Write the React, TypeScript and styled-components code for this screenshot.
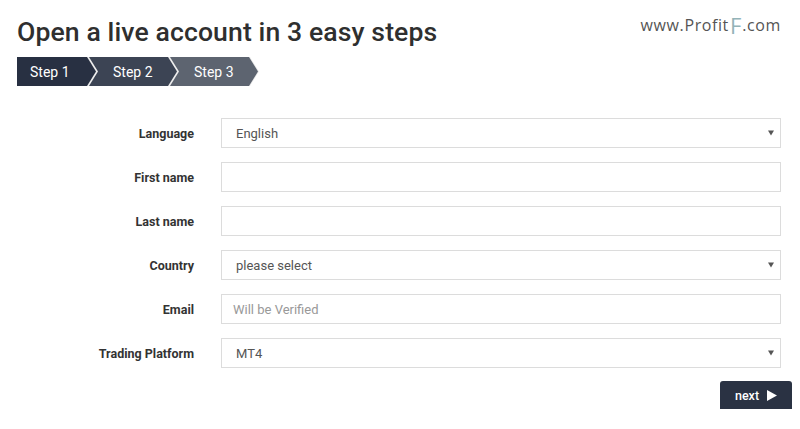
import React from "react";
import styled, { createGlobalStyle } from "styled-components";

const Global = createGlobalStyle`
  html, body { margin: 0; padding: 0; background: #fff; }
  body { font-family: Roboto, "Liberation Sans", Arial, sans-serif; color: #333; }
  * { box-sizing: border-box; }
`;

const Page = styled.div`
  width: 800px;
  height: 429px;
  padding: 15px 8px 0 17px;
  position: relative;
`;

const Header = styled.div`
  display: flex;
  justify-content: space-between;
  align-items: flex-start;
`;

const Title = styled.h1`
  margin: 0;
  font-size: 26.6px;
  font-weight: 500;
  line-height: 34px;
  color: #2f2f2f;
  letter-spacing: 0.1px;
`;

const Logo = styled.div`
  font-family: "Open Sans", "DejaVu Sans", sans-serif;
  font-size: 16px;
  color: #555;
  margin-top: -8px;
  margin-right: 11px;
  letter-spacing: 0.6px;
  display: flex;
  align-items: baseline;
  span {
    color: #93b3b8;
    font-size: 22px;
    font-weight: 400;
    margin: 0 1px;
    letter-spacing: 0;
    position: relative;
    top: 3px;
  }
`;

const Steps = styled.div`
  display: flex;
  margin-top: 8px;
  height: 29px;
`;

const Step = styled.div<{ $bg: string; $first?: boolean }>`
  position: relative;
  width: ${(p) => (p.$first ? 80 : 90)}px;
  height: 29px;
  margin-left: ${(p) => (p.$first ? 0 : -9)}px;
  background: #e8e8e8;
  clip-path: ${(p) =>
    p.$first
      ? "polygon(0 0, 71px 0, 80px 50%, 71px 100%, 0 100%)"
      : "polygon(0 0, 81px 0, 90px 50%, 81px 100%, 0 100%, 9px 50%)"};
  &::after {
    content: "";
    position: absolute;
    inset: 0;
    background: ${(p) => p.$bg};
    clip-path: ${(p) =>
      p.$first
        ? "polygon(0 0, 70px 0, 79px 50%, 70px 100%, 0 100%)"
        : "polygon(1px 0, 80px 0, 89px 50%, 80px 100%, 1px 100%, 10px 50%)"};
  }
`;

const StepLabel = styled.span<{ $first?: boolean }>`
  position: relative;
  z-index: 1;
  display: flex;
  height: 100%;
  align-items: center;
  padding-left: ${(p) => (p.$first ? 13 : 25)}px;
  color: #fff;
  font-size: 14px;
  font-weight: 400;
`;

const Form = styled.form`
  display: flex;
  flex-direction: column;
  gap: 14px;
  margin-top: 32px;
`;

const Row = styled.div`
  display: grid;
  grid-template-columns: 177px 560px;
  column-gap: 27px;
  align-items: center;
`;

const Label = styled.label`
  text-align: right;
  font-size: 12.5px;
  font-weight: 700;
  color: #333;
`;

const Field = styled.div`
  position: relative;
  height: 30px;
  border: 1px solid #dcdcdc;
  background: #fff;
  display: flex;
  align-items: center;
`;

const Value = styled.span<{ $placeholder?: boolean }>`
  font-size: 13px;
  padding-left: ${(p) => (p.$placeholder ? 11 : 14)}px;
  color: ${(p) => (p.$placeholder ? "#999" : "#555")};
`;

const Caret = styled.span`
  position: absolute;
  right: 6px;
  top: 50%;
  transform: translateY(-50%);
  width: 0;
  height: 0;
  border-left: 3px solid transparent;
  border-right: 3px solid transparent;
  border-top: 5px solid #555;
`;

const Actions = styled.div`
  display: flex;
  justify-content: flex-end;
  margin-top: 13px;
`;

const Next = styled.button`
  width: 72px;
  height: 28px;
  border: none;
  border-radius: 3px 3px 0 0;
  background: #2a3243;
  color: #fff;
  font-family: Roboto, sans-serif;
  font-size: 12.5px;
  font-weight: 500;
  display: flex;
  align-items: center;
  justify-content: center;
  gap: 8px;
  padding: 0;
  svg { display: block; }
`;

const rows: { label: string; value?: string; placeholder?: string; select?: boolean }[] = [
  { label: "Language", value: "English", select: true },
  { label: "First name" },
  { label: "Last name" },
  { label: "Country", value: "please select", select: true },
  { label: "Email", placeholder: "Will be Verified" },
  { label: "Trading Platform", value: "MT4", select: true },
];

export default function App() {
  return (
    <Page>
      <Global />
      <Header>
        <Title>Open a live account in 3 easy steps</Title>
        <Logo>
          www.Profit<span>F</span>.com
        </Logo>
      </Header>
      <Steps>
        <Step $bg="#283042" $first>
          <StepLabel $first>Step 1</StepLabel>
        </Step>
        <Step $bg="#3c4454">
          <StepLabel>Step 2</StepLabel>
        </Step>
        <Step $bg="#5d6470">
          <StepLabel>Step 3</StepLabel>
        </Step>
      </Steps>
      <Form>
        {rows.map((r) => (
          <Row key={r.label}>
            <Label>{r.label}</Label>
            <Field>
              {r.value && <Value>{r.value}</Value>}
              {r.placeholder && <Value $placeholder>{r.placeholder}</Value>}
              {r.select && <Caret />}
            </Field>
          </Row>
        ))}
      </Form>
      <Actions>
        <Next type="button">
          next
          <svg width="10" height="11" viewBox="0 0 10 11">
            <path d="M0 0 L10 5.5 L0 11 Z" fill="#fff" />
          </svg>
        </Next>
      </Actions>
    </Page>
  );
}
